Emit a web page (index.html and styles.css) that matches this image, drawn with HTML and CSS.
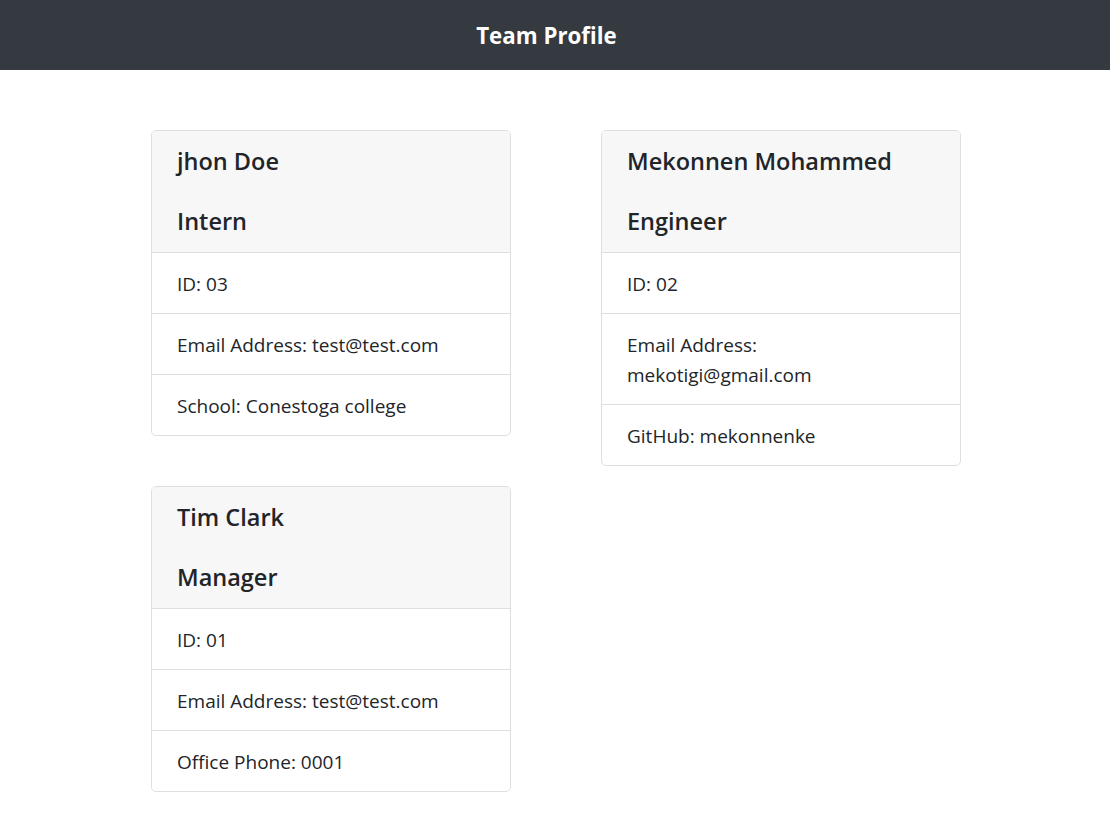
FILE: index.html
```html
<!DOCTYPE html>
<html lang="en">
<head>
<meta charset="utf-8">
<title>Team Profile</title>
<link rel="stylesheet" href="styles.css">
</head>
<body>
<header class="navbar">
  <h1 class="brand">Team Profile</h1>
</header>
<main class="team">
  <div class="column">
    <section class="card">
      <div class="card-header">
        <h2 class="name">jhon Doe</h2>
        <h2 class="role">Intern</h2>
      </div>
      <ul class="list">
        <li class="item">ID: 03</li>
        <li class="item">Email Address: test@test.com</li>
        <li class="item">School: Conestoga college</li>
      </ul>
    </section>
    <section class="card">
      <div class="card-header">
        <h2 class="name">Tim Clark</h2>
        <h2 class="role">Manager</h2>
      </div>
      <ul class="list">
        <li class="item">ID: 01</li>
        <li class="item">Email Address: test@test.com</li>
        <li class="item">Office Phone: 0001</li>
      </ul>
    </section>
  </div>
  <div class="column">
    <section class="card">
      <div class="card-header">
        <h2 class="name">Mekonnen Mohammed</h2>
        <h2 class="role">Engineer</h2>
      </div>
      <ul class="list">
        <li class="item">ID: 02</li>
        <li class="item">Email Address: mekotigi@gmail.com</li>
        <li class="item">GitHub: mekonnenke</li>
      </ul>
    </section>
  </div>
</main>
</body>
</html>
```

FILE: styles.css
```css
* { box-sizing: border-box; }
html, body { margin: 0; padding: 0; }
body {
  font-family: "Open Sans", "Noto Sans", sans-serif;
  color: #212529;
  background: #fff;
  font-size: 19px;
  line-height: 30px;
}
.navbar {
  height: 70px;
  background: #343a40;
  display: flex;
  align-items: center;
  justify-content: center;
  padding: 2px 17px 0 0;
}
.brand {
  margin: 0;
  color: #fff;
  font-size: 22.3px;
  font-weight: 700;
  line-height: 30px;
}
.team {
  display: flex;
  gap: 90px;
  align-items: flex-start;
  margin: 60px 0 0 151px;
}
.column {
  width: 360px;
  display: flex;
  flex-direction: column;
  gap: 50px;
}
.card {
  border: 1px solid #dfdfdf;
  border-radius: 5px;
  overflow: hidden;
}
.card-header {
  background: #f7f7f7;
  padding: 15px 25px 16px;
  display: flex;
  flex-direction: column;
  gap: 30px;
  border-bottom: 1px solid #dfdfdf;
}
.name, .role {
  margin: 0;
  font-size: 23.5px;
  font-weight: 600;
  line-height: 30px;
}
.list {
  list-style: none;
  margin: 0;
  padding: 0;
}
.item {
  padding: 16px 25px 14px;
  border-bottom: 1px solid #dfdfdf;
}
.item:last-child { border-bottom: 0; }
```
